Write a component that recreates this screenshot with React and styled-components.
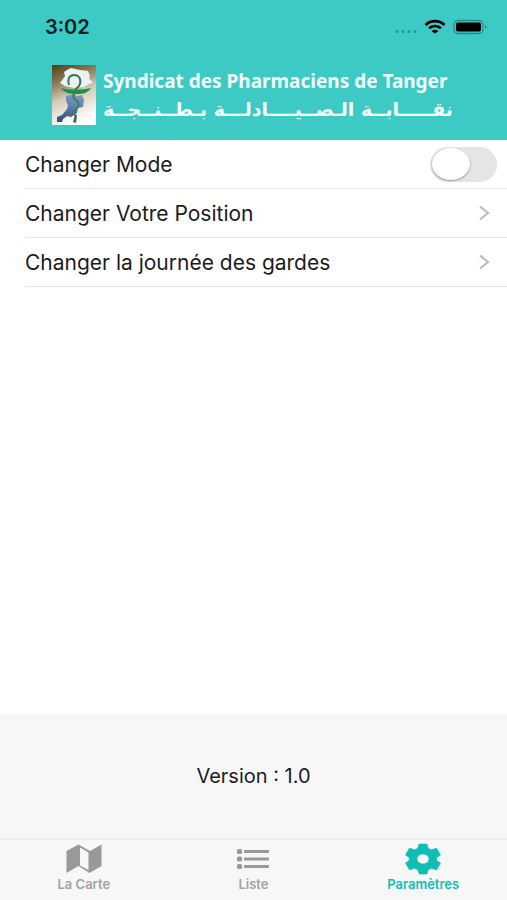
import React, { useState } from 'react';
import styled, { createGlobalStyle } from 'styled-components';

const GlobalStyle = createGlobalStyle`
  * { box-sizing: border-box; }

  body {
    margin: 0;
    background: #fff;
    font-family: Inter, Roboto, sans-serif;
    color: #1c1c1e;
  }
`;

const Screen = styled.div`
  min-height: 100vh;
  display: flex;
  flex-direction: column;
`;

/* Header */
const Header = styled.header`
  height: 140px;
  background: #3dcac4;
`;

const StatusBar = styled.div`
  display: flex;
  align-items: center;
  justify-content: space-between;
  height: 54px;
  padding: 0 20px 0 45px;
`;

const Time = styled.time`
  font-size: 20px;
  font-weight: 600;
  line-height: 24px;
  color: #06201f;
`;

const StatusIcons = styled.div`
  display: flex;
  align-items: center;
  gap: 7px;
`;

const Brand = styled.div`
  display: flex;
  align-items: center;
  gap: 7px;
  padding: 11px 24px 0 52px;
`;

const BrandText = styled.div`
  display: flex;
  flex-direction: column;
  color: #f2fffe;
  white-space: nowrap;
`;

const BrandName = styled.h1`
  margin: 0;
  font-family: 'Noto Sans', 'Open Sans', sans-serif;
  font-size: 19px;
  font-weight: 700;
  line-height: 28px;
`;

const BrandArabic = styled.p`
  margin: 0;
  font-family: 'DejaVu Sans', sans-serif;
  font-size: 19px;
  font-weight: 700;
  line-height: 28px;
`;

/* Settings list */
const Main = styled.main`
  flex: 1;
`;

const List = styled.ul`
  margin: 0;
  padding: 0 0 0 25px;
  list-style: none;
`;

const Item = styled.li`
  height: 49px;
  border-bottom: 1px solid #e6e6e6;
`;

const rowStyle = `
  display: flex;
  align-items: center;
  justify-content: space-between;
  width: 100%;
  height: 100%;
  border: 0;
  background: none;
  color: inherit;
  font: inherit;
  font-size: 21px;
  text-align: left;
  cursor: pointer;
`;

const SwitchRow = styled.label`
  ${rowStyle}
  padding: 0 10px 0 0;
`;

const LinkRow = styled.button`
  ${rowStyle}
  padding: 0 16px 0 0;
`;

const Switch = styled.input`
  appearance: none;
  display: flex;
  align-items: center;
  width: 67px;
  height: 35px;
  margin: 0;
  padding: 0 2px;
  border-radius: 18px;
  background: #e5e5e5;
  cursor: pointer;

  &::before {
    content: '';
    width: 38px;
    height: 32px;
    border-radius: 50%;
    background: #fff;
    box-shadow: 0 1px 2px rgba(0, 0, 0, 0.35);
  }

  &:checked {
    justify-content: flex-end;
    background: #10bdb4;
  }
`;

const Version = styled.footer`
  display: flex;
  align-items: center;
  justify-content: center;
  height: 124px;
  background: #f7f7f7;
  font-size: 20px;
`;

/* Tabs */
const TabBar = styled.nav`
  display: grid;
  grid-template-columns: repeat(3, 1fr);
  gap: 2px;
  height: 62px;
  border-top: 2px solid #ededed;
  background: #f7f7f7;
`;

const Tab = styled.a`
  display: flex;
  flex-direction: column;
  align-items: center;
  padding-top: 2px;
  font-size: 13px;
  font-weight: 600;
  line-height: 16px;
  text-decoration: none;
  color: ${({ $active }) => ($active ? '#10bdb4' : '#a3a3a3')};
`;

const CellularIcon = () => (
  <svg width="23" height="16" viewBox="0 0 23 16" aria-hidden="true" fill="#289792">
    <circle cx="3" cy="12.500" r="1.600" />
    <circle cx="9" cy="12.500" r="1.600" />
    <circle cx="15" cy="12.500" r="1.600" />
    <circle cx="21" cy="12.500" r="1.600" />
  </svg>
);

const WifiIcon = () => (
  <svg width="22" height="16" viewBox="0 0 22 16" aria-hidden="true" fill="none" stroke="#000">
    <path d="M1.500 6C7 .9 15 .9 20.500 6" strokeWidth="2.800" />
    <path d="M5 9.200C8.500 6.200 13.500 6.200 17 9.200" strokeWidth="2.600" />
    <path d="M11 14.800 7.700 12C9.500 10.300 12.500 10.300 14.300 12Z" fill="#000" stroke="none" />
  </svg>
);

const BatteryIcon = () => (
  <svg width="34" height="16" viewBox="0 0 34 16" aria-hidden="true">
    <rect x="1" y="1.500" width="29" height="13" rx="4" fill="none" stroke="#278a86" strokeWidth="1.300" />
    <rect x="3" y="3.500" width="25" height="9" rx="1.800" fill="#000" />
    <path d="M32 6v4c2-.7 2-3.300 0-4Z" fill="#278a86" />
  </svg>
);

const BrandLogo = () => (
  <svg width="44" height="60" viewBox="0 0 44 60" role="img" aria-label="Logo du syndicat">
    <defs>
      <linearGradient id="logoBg" x1="0" y1="0" x2="0.300" y2="1">
        <stop offset="0" stopColor="#4f3b1a" />
        <stop offset="0.300" stopColor="#8a7a56" />
        <stop offset="0.600" stopColor="#d6cdbb" />
        <stop offset="1" stopColor="#fdfbf8" />
      </linearGradient>
      <linearGradient id="logoLand" x1="0.500" y1="0" x2="0.300" y2="1">
        <stop offset="0" stopColor="#8298bd" />
        <stop offset="0.500" stopColor="#5879a8" />
        <stop offset="1" stopColor="#304f70" />
      </linearGradient>
    </defs>
    <rect width="44" height="60" fill="url(#logoBg)" />
    <path
      d="M15 5l4-2 9 2 8 1 2 5-1 2 4 5-4 1-5 3-10 1-9-2-5-3 3-4 2-3-1-4Z"
      fill="#edf0f4"
    />
    <path
      d="M14 31l7-2 4 2 5-1 2 5-1 7-5 1-1 5-6 4-4-1-4 3-1 3-5 0 0-5 5-2 5-6 1-4-2-4Z"
      fill="url(#logoLand)"
    />
    <path
      d="M17 20c-2-5 0-10 5-10 6 0 8 6 5 11l-4 4"
      fill="none"
      stroke="#327d4b"
      strokeWidth="2"
    />
    <path d="M9 23c8 2 22 2 30 0-3 5-8 6-14 6-7 0-13-1-16-6Z" fill="#159545" />
    <path
      d="M23 28c-3 3-2 5 1 7 4 3 3 6 0 9-3 2-3 5 0 7"
      fill="none"
      stroke="#348654"
      strokeWidth="2"
    />
    <path d="M23 50l-2 7 3 1 1-8Z" fill="#3d6556" />
  </svg>
);

const Chevron = () => (
  <svg width="14" height="16" viewBox="0 0 14 16" aria-hidden="true">
    <path d="M3 1.500 11 8 3 14.500" fill="none" stroke="#bcbcbc" strokeWidth="2.200" />
  </svg>
);

const MapIcon = () => (
  <svg width="36" height="34" viewBox="0 0 36 34" aria-hidden="true" fill="#999">
    <path
      fillRule="evenodd"
      d="M.5 9 12.500 2.500 24 9 35.500 2.500V24L23.500 31 12.500 24 .5 31ZM14 5.500V23.500L22.500 28V10.500Z"
    />
  </svg>
);

const ListIcon = () => (
  <svg width="34" height="34" viewBox="0 0 34 34" aria-hidden="true" fill="#999">
    {[7, 14.5, 22].map((y) => (
      <g key={y}>
        <rect x="1" y={y} width="5" height="5" rx="1.500" />
        <rect x="8" y={y + 1} width="25" height="3" rx="0.500" />
      </g>
    ))}
  </svg>
);

const GearIcon = () => (
  <svg width="36" height="34" viewBox="0 0 36 34" aria-hidden="true">
    <path
      fill="currentColor"
      fillRule="evenodd"
      d="M14 2H22L23 6 26.500 7.800 31.500 6 35.500 13 31.800 15.500V18.500L35.500 21 31.500 28 26.500 26.200 23 28 22 32H14L13 28 9.500 26.200 4.500 28 .5 21 4.200 18.500V15.500L.5 13 4.500 6 9.500 7.800 13 6ZM18 12a6 5 0 1 0 0 10 6 5 0 1 0 0-10Z"
      stroke="currentColor"
      strokeWidth="0.600"
      strokeLinejoin="round"
    />
  </svg>
);

const tabs = [
  { id: 'carte', label: 'La Carte', Icon: MapIcon },
  { id: 'liste', label: 'Liste', Icon: ListIcon },
  { id: 'parametres', label: 'Paramètres', Icon: GearIcon },
];

const links = ['Changer Votre Position', 'Changer la journée des gardes'];

export default function App() {
  const [mode, setMode] = useState(false);
  const [active, setActive] = useState('parametres');

  return (
    <Screen>
      <GlobalStyle />
      <Header>
        <StatusBar>
          <Time>3:02</Time>
          <StatusIcons>
            <CellularIcon />
            <WifiIcon />
            <BatteryIcon />
          </StatusIcons>
        </StatusBar>
        <Brand>
          <BrandLogo />
          <BrandText>
            <BrandName>Syndicat des Pharmaciens de Tanger</BrandName>
            <BrandArabic lang="ar" dir="rtl">نقـــــابــة الـصــيــــادلـــة بـطــنــجــة</BrandArabic>
          </BrandText>
        </Brand>
      </Header>

      <Main>
        <List>
          <Item>
            <SwitchRow>
              Changer Mode
              <Switch
                type="checkbox"
                role="switch"
                checked={mode}
                onChange={(e) => setMode(e.target.checked)}
              />
            </SwitchRow>
          </Item>
          {links.map((label) => (
            <Item key={label}>
              <LinkRow type="button">
                {label}
                <Chevron />
              </LinkRow>
            </Item>
          ))}
        </List>
      </Main>

      <Version>Version : 1.0</Version>
      <TabBar>
        {tabs.map(({ id, label, Icon }) => (
          <Tab
            key={id}
            href={`#${id}`}
            $active={active === id}
            aria-current={active === id ? 'page' : undefined}
            onClick={() => setActive(id)}
          >
            <Icon />
            {label}
          </Tab>
        ))}
      </TabBar>
    </Screen>
  );
}
